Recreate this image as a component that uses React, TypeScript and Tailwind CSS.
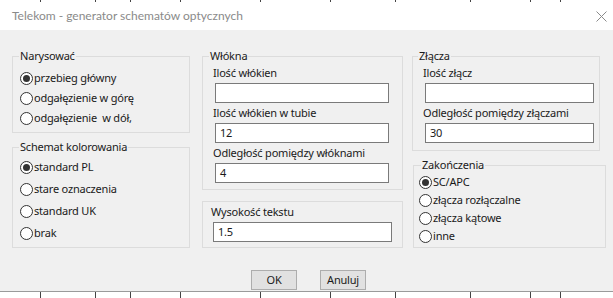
import React from 'react';

const font = { fontFamily: '"Noto Sans", "Liberation Sans", sans-serif' };
const txt = 'text-[11px] leading-[16px] tracking-[-0.2px] text-[#1a1a1a]';

function Radio({ label, checked = false, h }: { label: string; checked?: boolean; h: string }) {
  return (
    <div className={`flex items-center ${h}`}>
      <div className="w-[13px] h-[13px] rounded-full border border-[#333] bg-white flex items-center justify-center shrink-0">
        {checked && <div className="w-[7px] h-[7px] rounded-full bg-[#333]" />}
      </div>
      <span className={`ml-[1px] whitespace-pre ${txt}`}>{label}</span>
    </div>
  );
}

function Field({ label, value = '', w, first = false }: { label: string; value?: string; w: string; first?: boolean }) {
  return (
    <div className={first ? 'mt-[1px]' : 'mt-[2px]'}>
      <div className={`whitespace-nowrap ${txt}`}>{label}</div>
      <div className={`mt-[2px] h-[20px] ${w} ml-[2px] bg-white border border-[#7a7a7a] flex items-center pl-[4px] ${txt}`}>
        {value}
      </div>
    </div>
  );
}

function Ticks() {
  const xs = [40, 95, 130, 180, 260, 330, 395, 470, 530, 560];
  return (
    <div className="flex h-full">
      {xs.map((x, i) => (
        <div key={i} className="h-full w-[1px] bg-[#444]" style={{ marginLeft: i === 0 ? x : x - xs[i - 1] - 1 }} />
      ))}
    </div>
  );
}

export default function App() {
  return (
    <div className="w-[613px] h-[298px] flex flex-col overflow-hidden bg-white" style={font}>
      {/* fragments of the window behind */}
      <div className="h-[2px] bg-white">
        <Ticks />
      </div>

      <div className="h-[28px] bg-white flex items-center pl-[12px] pr-[6px]">
        <span className="font-['Lato'] text-[12px] text-[#8a8a8a]">Telekom - generator schematów optycznych</span>
        <svg className="ml-auto" width="11" height="11" viewBox="0 0 11 11">
          <path d="M0.5 0.5 L10.5 10.5 M10.5 0.5 L0.5 10.5" stroke="#8a8a8a" strokeWidth="1" />
        </svg>
      </div>

      <div className="h-[261px] bg-[#f0f0f0] flex flex-col pt-[18px]">
        <div className="flex pl-[12px]">
          {/* left column */}
          <div className="w-[178px] flex flex-col">
            <fieldset className="h-[85px] border border-[#dcdcdc] px-[6px]">
              <legend className={`px-[1px] ${txt}`}>Narysować</legend>
              <div className="mt-[4px] pl-[1px]">
                <Radio h="h-[20px]" label="przebieg główny" checked />
                <Radio h="h-[20px]" label="odgałęzienie w górę" />
                <Radio h="h-[20px]" label="odgałęzienie  w dół," />
              </div>
            </fieldset>
            <fieldset className="mt-[6px] h-[109px] border border-[#dcdcdc] px-[6px]">
              <legend className={`px-[1px] ${txt}`}>Schemat kolorowania</legend>
              <div className="mt-[1px] pl-[1px]">
                <Radio h="h-[22px]" label="standard PL" checked />
                <Radio h="h-[22px]" label="stare oznaczenia" />
                <Radio h="h-[22px]" label="standard UK" />
                <Radio h="h-[22px]" label="brak" />
              </div>
            </fieldset>
          </div>

          {/* middle column */}
          <div className="ml-[12px] w-[201px] flex flex-col">
            <fieldset className="h-[142px] border border-[#dcdcdc] px-[6px]">
              <legend className={`px-[1px] ${txt}`}>Włókna</legend>
              <div className="pl-[4px]">
                <Field first label="Ilość włókien" w="w-[174px]" />
                <Field label="Ilość włókien w tubie" value="12" w="w-[174px]" />
                <Field label="Odległość pomiędzy włóknami" value="4" w="w-[174px]" />
              </div>
            </fieldset>
            <div className="mt-[11px] h-[47px] border border-[#dcdcdc] pl-[8px] pt-[2px]">
              <div className={txt}>Wysokość tekstu</div>
              <div className={`mt-[2px] h-[20px] w-[179px] ml-[2px] bg-white border border-[#7a7a7a] flex items-center pl-[4px] ${txt}`}>
                1.5
              </div>
            </div>
          </div>

          {/* right column */}
          <div className="ml-[9px] flex flex-col">
            <fieldset className="w-[186px] h-[103px] border border-[#dcdcdc] px-[5px]">
              <legend className={`px-[1px] ${txt}`}>Złącza</legend>
              <div className="pl-[5px]">
                <Field first label="Ilość złącz" w="w-[169px]" />
                <Field label="Odległość pomiędzy złączami" value="30" w="w-[169px]" />
              </div>
            </fieldset>
            <fieldset className="mt-[6px] ml-[1px] w-[193px] h-[91px] border border-[#dcdcdc] px-[7px]">
              <legend className={`px-[1px] ${txt}`}>Zakończenia</legend>
              <div className="-ml-[2px]">
                <Radio h="h-[18px]" label="SC/APC" checked />
                <Radio h="h-[18px]" label="złącza rozłączalne" />
                <Radio h="h-[18px]" label="złącza kątowe" />
                <Radio h="h-[18px]" label="inne" />
              </div>
            </fieldset>
          </div>
        </div>

        <div className="mt-[22px] flex pl-[251px] gap-[23px]">
          <button className={`w-[46px] h-[20px] bg-[#e1e1e1] border border-[#adadad] ${txt}`}>OK</button>
          <button className={`w-[46px] h-[20px] bg-[#e1e1e1] border border-[#adadad] ${txt}`}>Anuluj</button>
        </div>
      </div>

      <div className="h-[1px] bg-[#9a9a9a]" />
      <div className="h-[6px] bg-white">
        <Ticks />
      </div>
    </div>
  );
}
